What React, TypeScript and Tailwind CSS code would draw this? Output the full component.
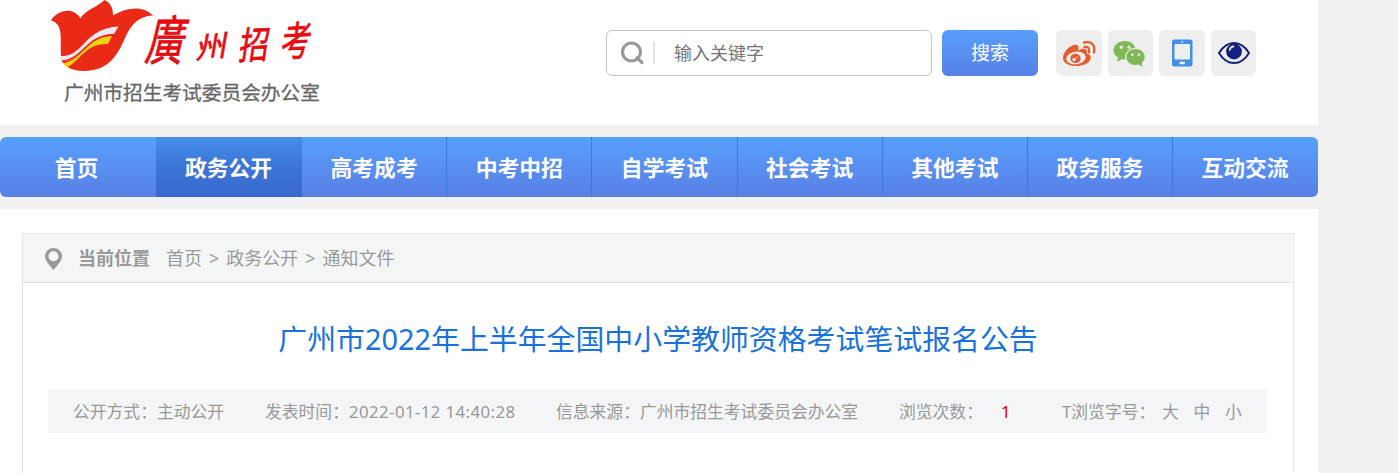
import React from "react";

const navItems = ["高考成考", "中考中招", "自学考试", "社会考试", "其他考试", "政务服务", "互动交流"];

function Tulip() {
  return (
    <svg className="h-[72px] w-[104px] shrink-0" viewBox="0 0 104 72">
      <path d="M0 20.5C7 9 23 7 29.5 18.5C34 10 45 8 53.5 0C60 3.5 62 8 62 15.5C77 6 93 6 102 15.5C87 16 80 25 74 38C66 57 56 71 33 71C20 71 11 66 10 56C9 40 13 24 0 20.5Z" fill="#e92a17" />
      <path d="M10 56C33 57 33 28 67.500 26.500L63 34C38 34 36 56 14.500 61.500L10.500 60Z" fill="#f1e7f2" />
      <path d="M12 63.500C34 59 33 37 61 36L57 44C35 43 31 59 16 67.500Z" fill="#f0d20c" />
      <path d="M11 61.500C34 58 34 36 63 34.500" fill="none" stroke="#e92a17" strokeWidth="1.500" />
    </svg>
  );
}

function Logo() {
  return (
    <div className="ml-[51px] w-[280px]">
      <div className="flex h-[76px]">
        <Tulip />
        <div className="flex font-['Noto_Sans_CJK_TC',sans-serif] leading-none text-[#e60c12] [-webkit-text-stroke:0.6px_#e60c12]">
          <span className="-ml-[6px] block h-[39px] w-[48px] -skew-x-[18deg] scale-y-[1.4] mt-[19px] text-[38px]">廣</span>
          <span className="block h-[30px] w-[43px] -rotate-6 -skew-x-[14deg] scale-y-[0.9] mt-[28px] text-[32px]">州</span>
          <span className="block h-[30px] w-[42px] -rotate-3 -skew-x-[14deg] scale-y-[1.25] mt-[27px] text-[30px]">招</span>
          <span className="block h-[30px] w-[40px] -rotate-3 -skew-x-[14deg] scale-y-[1.35] mt-[23px] text-[30px]">考</span>
        </div>
      </div>
      <div className="ml-[13px] mt-[2px] whitespace-nowrap text-[19.7px] leading-[30px] text-[#666] [-webkit-text-stroke:0.3px_#666]">广州市招生考试委员会办公室</div>
    </div>
  );
}

function Weibo() {
  return (
    <svg className="size-[34px]" viewBox="0 0 34 34" fill="none">
      <path d="M1 22C1 15 10 7.500 15 9C17 9.500 17 12 16 14.500C21 11.500 27 12.500 24.500 17.500C28 18.500 29.500 20 28.500 23C26 32.500 1 32.500 1 22Z" fill="#e45c2f" />
      <ellipse cx="14" cy="22" rx="9.800" ry="6.300" fill="#eee" transform="rotate(-7 14 22)" />
      <ellipse cx="13.500" cy="22.400" rx="5.200" ry="4.600" fill="#e45c2f" />
      <circle cx="12" cy="23.500" r="1.700" fill="#eee" /><circle cx="14.800" cy="21.300" r=".8" fill="#eee" />
      <path d="M22.500 11Q28 10 27 16.500M22 6.500Q34 4.500 32 16.500" stroke="#e45c2f" strokeWidth="2.300" strokeLinecap="round" />
    </svg>
  );
}

function Wechat() {
  return (
    <svg className="size-[34px]" viewBox="0 0 34 34" fill="#80b956">
      <path d="M12 5C5.500 5 .5 9 .5 14.500Q.5 18.500 5 21.500L4 26L9 23Q15 24.500 19 21.500Q24 18 22.500 12.500C21.500 8 17.500 5 12 5Z" />
      <ellipse cx="22.500" cy="21" rx="9.900" ry="8.700" stroke="#eee" strokeWidth="1.200" /><path d="M25.500 28L29 31V25Z" />
      <g fill="#eee"><circle cx="8.300" cy="11.200" r="1.600" /><circle cx="16" cy="11.200" r="1.600" /><circle cx="19.300" cy="18.700" r="1.300" /><circle cx="25.800" cy="18.700" r="1.300" /></g>
    </svg>
  );
}

function Tablet() {
  return (
    <svg className="size-[34px]" viewBox="0 0 34 34">
      <rect x="7" y="3.500" width="20.500" height="27" rx="2.500" fill="#4090e6" />
      <rect x="9.500" y="8" width="15.500" height="15.500" rx=".8" fill="#eee" />
      <circle cx="17.200" cy="5.800" r=".9" fill="#eee" /><rect x="14.500" y="25.800" width="5.500" height="2.400" rx=".6" fill="#eee" />
    </svg>
  );
}

function Eye() {
  return (
    <svg className="size-[34px]" viewBox="0 0 34 34">
      <path d="M2 17C10 3.600 24 3.600 32 17C24 30.400 10 30.400 2 17Z" fill="#eee" stroke="#15217e" strokeWidth="2" strokeLinejoin="round" />
      <circle cx="17" cy="15.500" r="7.900" fill="#15217e" /><path d="M12.800 14Q13 10.800 16.500 10.300" fill="none" stroke="#eee" strokeWidth="1.700" strokeLinecap="round" />
    </svg>
  );
}

export default function App() {
  return (
    <div className="h-[473px] w-full overflow-hidden bg-[#f1f1f1] font-['Noto_Sans','Noto_Sans_CJK_SC',sans-serif]">
      <div className="w-[1318px]">
        <header className="flex h-[125px] bg-white">
          <Logo />
          <div className="ml-[275px] mt-[30px] flex h-[46px]">
            <div className="flex w-[326px] items-center rounded-[6px] border border-[#c5c5c5]">
              <svg className="ml-[13px] size-[24px]" viewBox="0 0 24 24" fill="none" stroke="#999" strokeWidth="3.200"><circle cx="11.500" cy="11" r="9" /><path d="M17 17L22 21.500" strokeLinecap="round" /></svg>
              <span className="ml-[9px] h-[22px] w-[2px] bg-[#e2e2e2]" />
              <span className="ml-[19px] text-[18px] text-[#757575]">输入关键字</span>
            </div>
            <button className="ml-[10px] w-[96px] rounded-[6px] bg-gradient-to-b from-[#579ffb] to-[#5780e5] text-[19px] text-white">搜索</button>
            <div className="ml-[18px] flex gap-[6px]">
              {[Weibo, Wechat, Tablet, Eye].map((Icon, i) => (
                <div key={i} className="flex h-[46px] w-[45.6px] items-center justify-center rounded-[6px] bg-[#eee]"><Icon /></div>
              ))}
            </div>
          </div>
        </header>
        <nav className="my-[12px] flex h-[60px] overflow-hidden rounded-[6px] bg-gradient-to-b from-[#57a0fb] via-[#588ff1] to-[#5780e3] text-[21.8px] font-bold leading-[61px] text-white">
          <span className="w-[156px] pr-[3px] text-center">首页</span>
          <span className="w-[146px] bg-gradient-to-b from-[#468ee7] via-[#3c75d7] to-[#3968cf] pr-[1px] text-center">政务公开</span>
          {navItems.map((item, i) => (
            <span key={item} className={i < 6 ? "w-[145.2px] border-r border-[#3d76d9] text-center" : "flex-1 pr-[1px] text-center"}>{item}</span>
          ))}
        </nav>
        <main className="h-[264px] bg-white pl-[22px] pt-[24px]">
          <div className="h-[240px] w-[1272px] border border-b-0 border-[#e3e5e5]">
            <div className="mr-[1px] flex h-[49px] items-center whitespace-pre border-b border-[#e1e4e4] bg-[#f4f6f6] text-[18px] text-[#999]">
              <svg className="ml-[22px] mt-px h-[22px] w-[17px]" viewBox="0 0 17 22"><path fillRule="evenodd" d="M8.500 0C4 0 0 3.400 0 8.300C0 13 6 19 8.500 22C11 19 17 13 17 8.300C17 3.400 13 0 8.500 0ZM8.500 3.300A5 5 0 1 1 8.500 13.300A5 5 0 1 1 8.500 3.300Z" fill="#999" /></svg>
              <b className="ml-[16px]">当前位置</b>
              <span className="ml-[16px]">首页</span><span className="mx-[7px]">&gt;</span><span>政务公开</span><span className="mx-[7px]">&gt;</span><span>通知文件</span>
            </div>
            <h1 className="h-[107px] whitespace-nowrap pt-[35px] text-center text-[28.9px] leading-[42px] text-[#1972dc]">广州市2022年上半年全国中小学教师资格考试笔试报名公告</h1>
            <div className="ml-[25px] flex h-[43px] w-[1219px] items-center whitespace-nowrap bg-[#f3f5f7] pl-[25px] text-[16.8px] text-[#999]">
              <span className="w-[192px]">公开方式：主动公开</span>
              <span className="w-[84px]">发表时间：</span>
              <span className="w-[207px] tracking-[0.42px]">2022-01-12 14:40:28</span>
              <span className="w-[343px]">信息来源：广州市招生考试委员会办公室</span>
              <span className="w-[102px]">浏览次数：</span>
              <span className="w-[61px] text-[#d00]">1</span>
              <span className="w-[100px]">T浏览字号：</span>
              <span className="w-[31.5px]">大</span><span className="w-[31.5px]">中</span><span>小</span>
            </div>
          </div>
        </main>
      </div>
    </div>
  );
}
